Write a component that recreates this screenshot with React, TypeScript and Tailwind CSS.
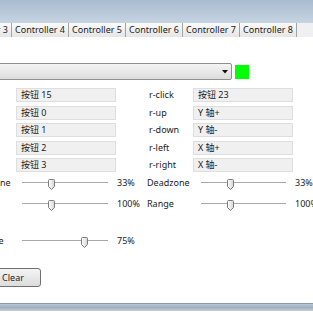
import React from 'react';

const tabs = ['Controller 3', 'Controller 4', 'Controller 5', 'Controller 6', 'Controller 7', 'Controller 8'];

const fieldRows = [
  { lv: '按钮 15', r: 'r-click', rv: '按钮 23' },
  { lv: '按钮 0', r: 'r-up', rv: 'Y 轴+' },
  { lv: '按钮 1', r: 'r-down', rv: 'Y 轴-' },
  { lv: '按钮 2', r: 'r-left', rv: 'X 轴+' },
  { lv: '按钮 3', r: 'r-right', rv: 'X 轴-' },
];

function Thumb({ pos }: { pos: number }) {
  return (
    <svg
      width="7"
      height="11"
      viewBox="0 0 7 11"
      className="absolute top-[6px]"
      style={{ left: Math.round(pos) }}
    >
      <defs>
        <linearGradient id="tg" x1="0" y1="0" x2="1" y2="0">
          <stop offset="0" stopColor="#ffffff" />
          <stop offset="1" stopColor="#d4d4d4" />
        </linearGradient>
      </defs>
      <path d="M0.5 1.5 Q0.5 0.5 1.5 0.5 H5.5 Q6.5 0.5 6.5 1.5 V7.5 L3.5 10.5 L0.5 7.5 Z" fill="url(#tg)" stroke="#7c7c7c" />
    </svg>
  );
}

function Slider({ label, value, max, text, width, shift = 0 }: { label: string; value: number; max: number; text: string; width: number; shift?: number }) {
  const pos = (value / max) * (width - 7);
  return (
    <div className="flex h-[20px] w-[179px] shrink-0 items-center">
      <span className="w-[54px] shrink-0 whitespace-nowrap" style={{ paddingLeft: shift }}>{label}</span>
      <div className="relative flex h-[20px] shrink-0 items-center" style={{ width }}>
        <div className="h-[2px] w-full border-t border-[#a9a9a9] bg-white" />
        <Thumb pos={pos} />
      </div>
      <span className="ml-[9px] whitespace-nowrap">{text}</span>
    </div>
  );
}

export default function App() {
  return (
    <div className="flex h-[317px] w-[313px] flex-col overflow-hidden bg-white font-['Noto_Sans','Noto_Sans_CJK_SC',sans-serif] text-[9px] text-[#1b1b1b]">
      {/* title bar */}
      <div className="h-[22px] shrink-0 bg-gradient-to-b from-[#a9bbcf] to-[#c4d3e2]" />

      {/* tabs */}
      <div className="flex h-[15px] shrink-0 border-t border-[#c9d3dd] bg-[#eef0f2]">
        {tabs.map((t, i) => (
          <div
            key={t}
            className={`flex h-full w-[57px] shrink-0 items-center justify-center border-r border-[#a3a3a3] bg-gradient-to-b from-[#fbfbfb] to-[#e6e6e6] ${i === 0 ? 'ml-[-45px]' : ''}`}
          >
            {t}
          </div>
        ))}
      </div>

      {/* content */}
      <div className="flex flex-1 flex-col">
        <div className="mt-[26px] flex items-center">
          <div className="relative ml-[-4px] h-[17px] w-[236px] rounded-[2px] border border-[#8e8f8f] bg-gradient-to-b from-[#f4f4f4] to-[#dcdcdc]">
            <svg width="6" height="4" viewBox="0 0 6 4" className="absolute right-[3px] top-[6px]">
              <path d="M0 0 H6 L3 3.5 Z" fill="#111" />
            </svg>
          </div>
          <div className="ml-[3px] h-[14px] w-[14px] bg-[#00ff00]" />
        </div>

        <div className="mt-[8px] flex flex-col gap-[3.5px]">
          {fieldRows.map(r => (
            <div key={r.r} className="flex h-[14px] items-center">
              <div className="ml-[16px] flex h-[14px] w-[100px] shrink-0 items-center border border-[#dedede] bg-[#f0f0f0] pl-[4px]">{r.lv}</div>
              <span className="ml-[33px] w-[44px] shrink-0 whitespace-nowrap">{r.r}</span>
              <div className="flex h-[14px] w-[100px] shrink-0 items-center border border-[#dedede] bg-[#f0f0f0] pl-[4px]">{r.rv}</div>
            </div>
          ))}
        </div>

        <div className="ml-[-32px] mt-px flex flex-col gap-px">
          <div className="flex">
            <Slider label="Deadzone" value={33} max={100} text="33%" width={86} />
            <Slider label="Deadzone" value={33} max={100} text="33%" width={85} />
          </div>
          <div className="flex">
            <Slider label="Range" value={100} max={300} text="100%" width={86} />
            <Slider label="Range" value={100} max={300} text="100%" width={85} />
          </div>
        </div>

        <div className="ml-[-32px] mt-[17px] flex">
          <Slider label="Rumble" value={75} max={100} text="75%" width={86} shift={3} />
        </div>

        <button className="ml-[-15px] mt-[17px] h-[19px] w-[56px] rounded-[3px] border border-[#707070] bg-gradient-to-b from-[#f4f4f4] to-[#dcdcdc] text-[9px]">
          Clear
        </button>
      </div>

      {/* window bottom edge */}
      <div className="mb-[6px] h-[8px] shrink-0 border-t border-[#8c9aa7] bg-gradient-to-b from-[#b9c6d3] via-[#9fb0c1] to-[#c5d0db]" />
    </div>
  );
}
